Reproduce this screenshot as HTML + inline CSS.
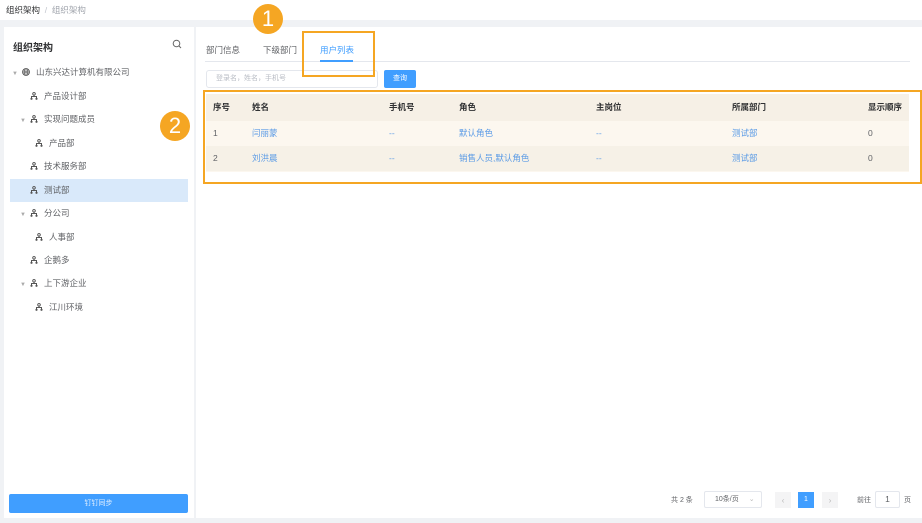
<!DOCTYPE html>
<html><head><meta charset="utf-8"><style>
*{margin:0;padding:0;box-sizing:border-box}
body{width:922px;height:523px;background:#f0f2f5;font-family:"Liberation Sans","Noto Sans CJK SC",sans-serif;font-size:8.5px;color:#606266;position:relative;overflow:hidden}
.a{position:absolute}
.topbar{left:0;top:0;width:922px;height:20px;background:#fff}
.bc{left:6px;top:4px;font-size:8.5px;color:#303133}
.left{left:4px;top:27px;width:190px;height:491px;background:#fff}
.right{left:196px;top:27px;width:726px;height:491px;background:#fff}
.tree div{position:absolute;left:0;height:23px;line-height:23px;font-size:8.5px;color:#606266;white-space:nowrap}
.ic{display:inline-block;width:8px;height:8px;vertical-align:-1px;margin-right:6px}
.ar{display:inline-block;color:#aaa;font-size:6px;width:10px}
.th{position:absolute;top:0;height:27px;line-height:27px;font-weight:bold;color:#303133}
.cell{position:absolute;line-height:25px}
.lk{color:#5b9be6}
.badge{position:absolute;width:30px;height:30px;border-radius:50%;background:#f5a623;color:#fff;font-size:22px;text-align:center;line-height:30px;font-weight:300}
</style></head><body>
<div class="a topbar"></div>
<div class="a bc">组织架构 <span style="color:#c0c4cc">&nbsp;/&nbsp;</span> <span style="color:#a0a4ac">组织架构</span></div>
<div class="a left">
 <div class="a" style="left:9px;top:12px;font-size:10px;font-weight:bold;color:#303133">组织架构</div>
 <svg class="a" style="left:168px;top:12px" width="10" height="10" viewBox="0 0 10 10"><circle cx="4.5" cy="4.5" r="3.3" fill="none" stroke="#666" stroke-width="1"/><path d="M7 7l2 2" stroke="#666"/></svg>
 <div class="a" style="left:6px;top:152px;width:178px;height:23px;background:#d9e9fa"></div>
 <div class="tree">
 <div style="top:34px;left:8px"><span class="ar">▼</span><svg class="ic" viewBox="0 0 8 8"><circle cx="4" cy="4" r="3.4" fill="none" stroke="#555"/><path d="M0.6 4h6.8M4 .6v6.8M2 1.5c1 1.5 1 3.5 0 5M6 1.5c-1 1.5-1 3.5 0 5" stroke="#555" stroke-width=".7" fill="none"/></svg>山东兴达计算机有限公司</div>
 <div style="top:58px;left:26px"><svg class="ic" viewBox="0 0 8 8"><path d="M4 0.5a1.3 1.3 0 1 0 0.01 0M4 3v1.5M1.5 6V4.5h5V6" stroke="#555" fill="none"/><circle cx="1.5" cy="6.8" r="1.1" fill="#555"/><circle cx="6.5" cy="6.8" r="1.1" fill="#555"/></svg>产品设计部</div>
 <div style="top:81px;left:16px"><span class="ar">▼</span><svg class="ic" viewBox="0 0 8 8"><path d="M4 0.5a1.3 1.3 0 1 0 0.01 0M4 3v1.5M1.5 6V4.5h5V6" stroke="#555" fill="none"/><circle cx="1.5" cy="6.8" r="1.1" fill="#555"/><circle cx="6.5" cy="6.8" r="1.1" fill="#555"/></svg>实现问题成员</div>
 <div style="top:105px;left:31px"><svg class="ic" viewBox="0 0 8 8"><path d="M4 0.5a1.3 1.3 0 1 0 0.01 0M4 3v1.5M1.5 6V4.5h5V6" stroke="#555" fill="none"/><circle cx="1.5" cy="6.8" r="1.1" fill="#555"/><circle cx="6.5" cy="6.8" r="1.1" fill="#555"/></svg>产品部</div>
 <div style="top:128px;left:26px"><svg class="ic" viewBox="0 0 8 8"><path d="M4 0.5a1.3 1.3 0 1 0 0.01 0M4 3v1.5M1.5 6V4.5h5V6" stroke="#555" fill="none"/><circle cx="1.5" cy="6.8" r="1.1" fill="#555"/><circle cx="6.5" cy="6.8" r="1.1" fill="#555"/></svg>技术服务部</div>
 <div style="top:152px;left:26px"><svg class="ic" viewBox="0 0 8 8"><path d="M4 0.5a1.3 1.3 0 1 0 0.01 0M4 3v1.5M1.5 6V4.5h5V6" stroke="#555" fill="none"/><circle cx="1.5" cy="6.8" r="1.1" fill="#555"/><circle cx="6.5" cy="6.8" r="1.1" fill="#555"/></svg>测试部</div>
 <div style="top:175px;left:16px"><span class="ar">▼</span><svg class="ic" viewBox="0 0 8 8"><path d="M4 0.5a1.3 1.3 0 1 0 0.01 0M4 3v1.5M1.5 6V4.5h5V6" stroke="#555" fill="none"/><circle cx="1.5" cy="6.8" r="1.1" fill="#555"/><circle cx="6.5" cy="6.8" r="1.1" fill="#555"/></svg>分公司</div>
 <div style="top:199px;left:31px"><svg class="ic" viewBox="0 0 8 8"><path d="M4 0.5a1.3 1.3 0 1 0 0.01 0M4 3v1.5M1.5 6V4.5h5V6" stroke="#555" fill="none"/><circle cx="1.5" cy="6.8" r="1.1" fill="#555"/><circle cx="6.5" cy="6.8" r="1.1" fill="#555"/></svg>人事部</div>
 <div style="top:222px;left:26px"><svg class="ic" viewBox="0 0 8 8"><path d="M4 0.5a1.3 1.3 0 1 0 0.01 0M4 3v1.5M1.5 6V4.5h5V6" stroke="#555" fill="none"/><circle cx="1.5" cy="6.8" r="1.1" fill="#555"/><circle cx="6.5" cy="6.8" r="1.1" fill="#555"/></svg>企鹅多</div>
 <div style="top:245px;left:16px"><span class="ar">▼</span><svg class="ic" viewBox="0 0 8 8"><path d="M4 0.5a1.3 1.3 0 1 0 0.01 0M4 3v1.5M1.5 6V4.5h5V6" stroke="#555" fill="none"/><circle cx="1.5" cy="6.8" r="1.1" fill="#555"/><circle cx="6.5" cy="6.8" r="1.1" fill="#555"/></svg>上下游企业</div>
 <div style="top:269px;left:31px"><svg class="ic" viewBox="0 0 8 8"><path d="M4 0.5a1.3 1.3 0 1 0 0.01 0M4 3v1.5M1.5 6V4.5h5V6" stroke="#555" fill="none"/><circle cx="1.5" cy="6.8" r="1.1" fill="#555"/><circle cx="6.5" cy="6.8" r="1.1" fill="#555"/></svg>江川环境</div>
 </div>
 <div class="a" style="left:5px;top:467px;width:179px;height:19px;background:#409eff;border-radius:2px;color:#e6f1ff;text-align:center;line-height:19px;font-size:7px">钉钉同步</div>
</div>
<div class="a right">
 <div class="a" style="left:10px;top:17px;color:#606266">部门信息</div>
 <div class="a" style="left:67px;top:17px;color:#606266">下级部门</div>
 <div class="a" style="left:124px;top:17px;color:#409eff">用户列表</div>
 <div class="a" style="left:9px;top:34px;width:705px;height:1px;background:#e4e7ed"></div>
 <div class="a" style="left:124px;top:33px;width:33px;height:2px;background:#409eff"></div>
 <div class="a" style="left:10px;top:43px;width:172px;height:18px;border:1px solid #e4e7ed;border-radius:3px;color:#b8bcc4;font-size:7px;line-height:16px;padding-left:9px">登录名，姓名，手机号</div>
 <div class="a" style="left:188px;top:43px;width:32px;height:18px;background:#409eff;border-radius:2px;color:#fff;font-size:7px;text-align:center;line-height:18px">查询</div>
 <div class="a" style="left:10px;top:67px;width:703px;height:78px;background:#fcf7ef">
  <div class="a" style="left:0;top:0;width:703px;height:27px;background:#f6f0e6"></div>
  <div class="a" style="left:0;top:52px;width:703px;height:25px;background:#f6f1e7"></div>
  <div class="th" style="left:7px">序号</div><div class="th" style="left:46px">姓名</div><div class="th" style="left:183px">手机号</div><div class="th" style="left:253px">角色</div><div class="th" style="left:390px">主岗位</div><div class="th" style="left:526px">所属部门</div><div class="th" style="left:662px">显示顺序</div>
  <div class="cell" style="top:27px;left:7px">1</div><div class="cell lk" style="top:27px;left:46px">闫丽蒙</div><div class="cell lk" style="top:27px;left:183px">--</div><div class="cell lk" style="top:27px;left:253px">默认角色</div><div class="cell lk" style="top:27px;left:390px">--</div><div class="cell lk" style="top:27px;left:526px">测试部</div><div class="cell" style="top:27px;left:662px">0</div>
  <div class="cell" style="top:52px;left:7px">2</div><div class="cell lk" style="top:52px;left:46px">刘洪晨</div><div class="cell lk" style="top:52px;left:183px">--</div><div class="cell lk" style="top:52px;left:253px">销售人员,默认角色</div><div class="cell lk" style="top:52px;left:390px">--</div><div class="cell lk" style="top:52px;left:526px">测试部</div><div class="cell" style="top:52px;left:662px">0</div>
 </div>
 <div class="a" style="left:475px;top:468px;font-size:7px">共 2 条</div>
 <div class="a" style="left:508px;top:464px;width:58px;height:17px;border:1px solid #e4e7ed;border-radius:2px;font-size:7px;line-height:15px;padding-left:10px">10条/页 <span style="color:#bbb;margin-left:8px">⌄</span></div>
 <div class="a" style="left:579px;top:465px;width:16px;height:16px;background:#f4f4f5;color:#bbb;text-align:center;line-height:16px">‹</div>
 <div class="a" style="left:602px;top:465px;width:16px;height:16px;background:#409eff;color:#fff;text-align:center;line-height:16px;font-size:7px">1</div>
 <div class="a" style="left:626px;top:465px;width:16px;height:16px;background:#f4f4f5;color:#bbb;text-align:center;line-height:16px">›</div>
 <div class="a" style="left:661px;top:468px;font-size:7px">前往</div>
 <div class="a" style="left:679px;top:464px;width:25px;height:17px;border:1px solid #e4e7ed;border-radius:2px;text-align:center;line-height:15px">1</div>
 <div class="a" style="left:708px;top:468px;font-size:7px">页</div>
</div>
<div class="a" style="left:302px;top:31px;width:73px;height:46px;border:2px solid #f5a623"></div>
<div class="a" style="left:203px;top:90px;width:719px;height:94px;border:2px solid #f5a623"></div>
<div class="badge" style="left:253px;top:4px">1</div>
<div class="badge" style="left:160px;top:111px">2</div>
</body></html>
